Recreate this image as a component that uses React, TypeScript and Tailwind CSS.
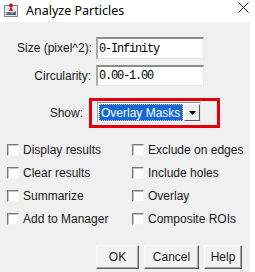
import React from 'react'

const leftChecks = ['Display results', 'Clear results', 'Summarize', 'Add to Manager']
const rightChecks = ['Exclude on edges', 'Include holes', 'Overlay', 'Composite ROIs']

function CheckRow({ label }: { label: string }) {
  return (
    <div className="flex items-center h-[23px]">
      <div className="w-[12px] h-[12px] bg-white border border-t-[#7a7a7a] border-l-[#7a7a7a] border-b-[#f4f4f4] border-r-[#f4f4f4] shadow-[inset_1px_1px_0_#c4c4c4]" />
      <span className="ml-[4px] text-[12px] text-[#1a1a1a] leading-none whitespace-nowrap">{label}</span>
    </div>
  )
}

function Field({ value, h }: { value: string; h: string }) {
  return (
    <div
      className={`w-[108px] ${h} bg-white flex items-center pl-[1px] border-t-2 border-l-2 border-b border-r border-t-[#8c8c8c] border-l-[#a8a8a8] border-b-[#e6e6e6] border-r-[#e6e6e6]`}
    >
      <span className="text-[12px] tracking-[-1.2px] text-black leading-none" style={{ fontFamily: '"Liberation Mono", monospace' }}>
        {value}
      </span>
    </div>
  )
}

function Btn({ label, w }: { label: string; w: string }) {
  return (
    <button
      className={`${w} h-[24px] bg-[#f2f2f2] border border-t-white border-l-white border-r-[#5f5f5f] border-b-[#5f5f5f] shadow-[inset_-1px_-1px_0_#a8a8a8] text-[12px] text-[#1a1a1a] leading-none`}
    >
      {label}
    </button>
  )
}

export default function App() {
  return (
    <div className="w-[255px] h-[272px] bg-white overflow-hidden" style={{ fontFamily: '"Liberation Sans", Arial, sans-serif' }}>
      {/* title bar */}
      <div className="h-[22px] flex items-center relative">
        <svg className="ml-[4px] mt-[-1px]" width="15" height="15" viewBox="0 0 15 15">
          <rect x="0.5" y="2.5" width="13" height="11" fill="#e8e8ec" stroke="#7d8694" />
          <rect x="2" y="9" width="10" height="3" fill="#8a93a3" />
          <path d="M5 8 L7 3 L9 8 Z" fill="#c4262e" />
          <circle cx="7" cy="2.5" r="2" fill="#b8141e" />
          <path d="M2 12 L5 9 L8 11 L12 8 L12 12 Z" fill="#5a6373" />
        </svg>
        <span className="ml-[7px] text-[12.5px] text-black leading-none" style={{ fontFamily: '"Noto Sans", "Liberation Sans", sans-serif' }}>
          Analyze Particles
        </span>
        <svg className="absolute left-[238px] top-[2px]" width="11" height="11" viewBox="0 0 11 11">
          <path d="M0.5 0.5 L10.5 10.5 M10.5 0.5 L0.5 10.5" stroke="#222" strokeWidth="1" />
        </svg>
      </div>

      {/* panel */}
      <div className="w-[250px] h-[250px] bg-[#f0f0f0] flex flex-col">
        <div className="flex items-center mt-[15px]">
          <span className="w-[92px] text-right text-[12px] text-[#1a1a1a] leading-none">Size (pixel^2):</span>
          <div className="ml-[4px]">
            <Field value="0-Infinity" h="h-[22px]" />
          </div>
        </div>
        <div className="flex items-center mt-[6px]">
          <span className="w-[91px] text-right text-[12px] text-[#1a1a1a] leading-none">Circularity:</span>
          <div className="ml-[5px]">
            <Field value="0.00-1.00" h="h-[21px]" />
          </div>
        </div>

        <div className="flex items-center mt-[12px]">
          <span className="w-[83px] text-right text-[12px] text-[#1a1a1a] leading-none">Show:</span>
          <div className="ml-[6px] w-[131px] h-[30px] border-[3px] border-[#e3000b] pl-[5px] pt-[1px]">
            <div className="w-[104px] h-[21px] bg-white border border-t-[#8c8c8c] border-l-[#a0a0a0] border-b-[#e8e8e8] border-r-[#e8e8e8] flex items-center pl-[1px]">
              <div className="w-[84px] h-[17px] bg-[#1467d4] border border-dotted border-[#d8c890] flex items-center pl-[1px] overflow-hidden">
                <span className="text-[12px] text-white leading-none whitespace-nowrap">Overlay Masks</span>
              </div>
              <div className="ml-[1px] w-[16px] h-[17px] bg-[#f0f0f0] border border-t-white border-l-white border-r-[#555] border-b-[#555] flex items-center justify-center">
                <svg width="7" height="4" viewBox="0 0 7 4">
                  <path d="M0 0 L7 0 L3.5 4 Z" fill="#000" />
                </svg>
              </div>
            </div>
          </div>
        </div>

        <div className="flex mt-[10px] pl-[7px]">
          <div className="w-[125px] flex flex-col">
            {leftChecks.map((c) => (
              <CheckRow key={c} label={c} />
            ))}
          </div>
          <div className="flex flex-col">
            {rightChecks.map((c) => (
              <CheckRow key={c} label={c} />
            ))}
          </div>
        </div>

        <div className="flex justify-end gap-[5px] pr-[8px] mt-[15px]">
          <Btn label="OK" w="w-[43px]" />
          <Btn label="Cancel" w="w-[55px]" />
          <Btn label="Help" w="w-[38px]" />
        </div>
      </div>
    </div>
  )
}
